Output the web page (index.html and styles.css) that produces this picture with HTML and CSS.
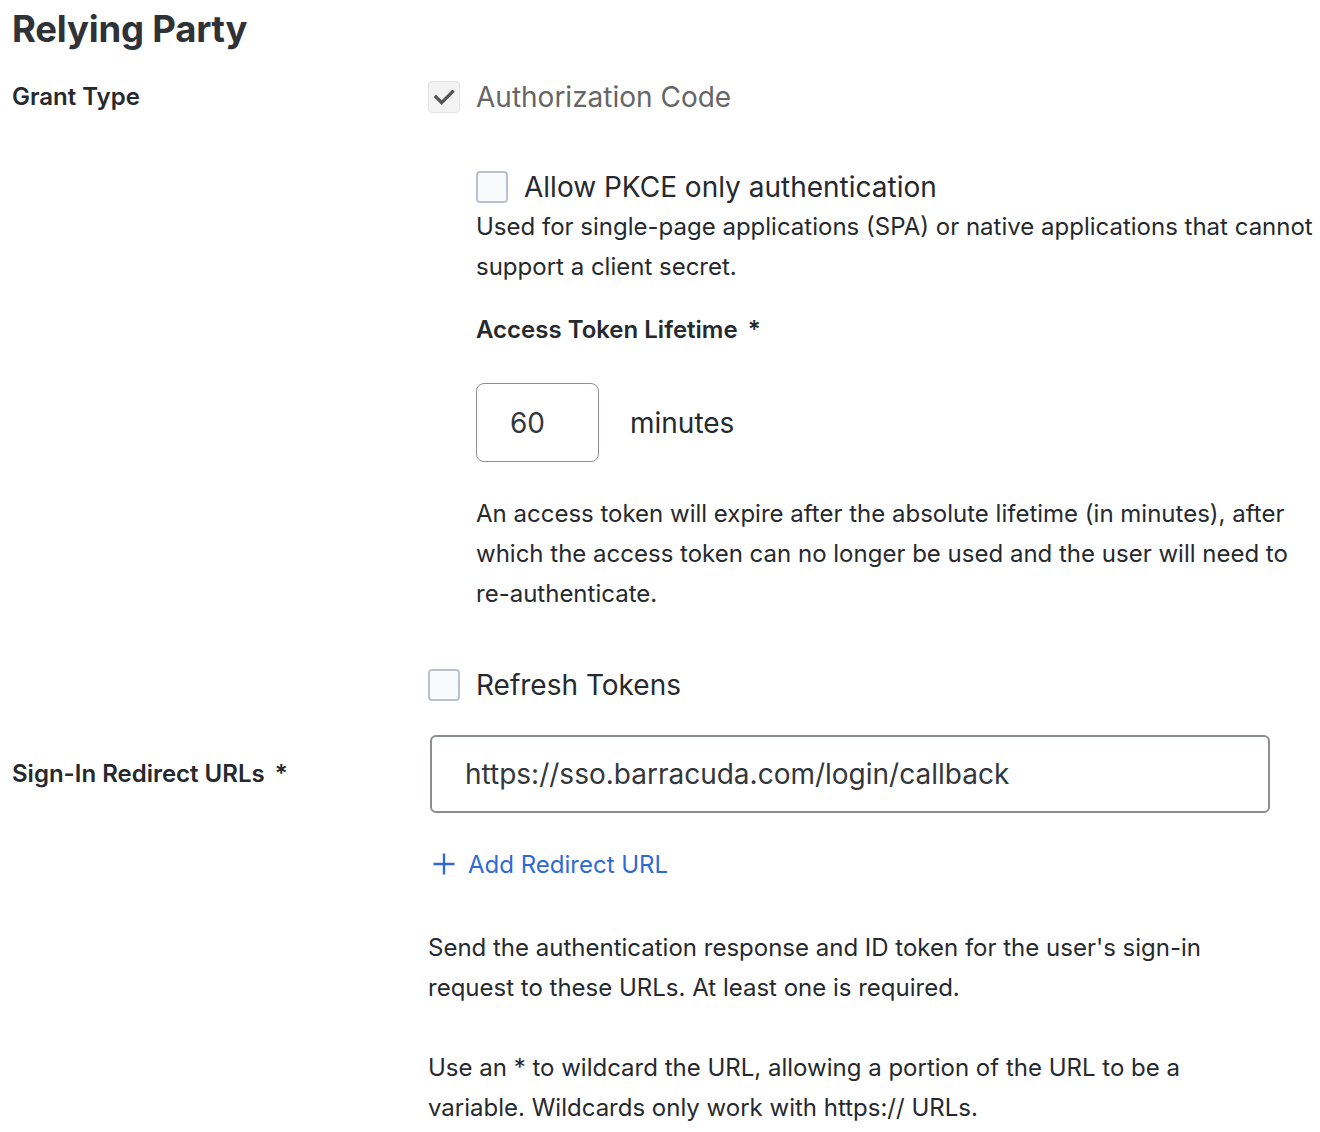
FILE: index.html
```html
<!DOCTYPE html>
<html lang="en">
<head>
<meta charset="utf-8">
<title>Relying Party</title>
<link rel="stylesheet" href="styles.css">
</head>
<body>
<main class="page">
  <h1 class="title">Relying Party</h1>
  <div class="form">
    <div class="label label-grant">Grant Type</div>
    <div class="field">
      <div class="check-row">
        <span class="box box-checked">
          <svg viewBox="0 0 32 32" width="32" height="32"><path d="M7.5 16l6 6L25 10.5" fill="none" stroke="#555" stroke-width="3.6" stroke-linecap="square"/></svg>
        </span>
        <span class="check-text check-text-disabled">Authorization Code</span>
      </div>
      <div class="nested">
        <div class="check-row check-row-pkce">
          <span class="box"></span>
          <span class="check-text">Allow PKCE only authentication</span>
        </div>
        <p class="desc">Used for single-page applications (SPA) or native applications that cannot support a client secret.</p>
        <div class="sub-label">Access Token Lifetime<span class="req">*</span></div>
        <div class="lifetime">
          <div class="num-input">60</div>
          <span class="unit">minutes</span>
        </div>
        <p class="desc desc-token">An access token will expire after the absolute lifetime (in minutes), after which the access token can no longer be used and the user will need to re-authenticate.</p>
      </div>
      <div class="check-row check-row-refresh">
        <span class="box"></span>
        <span class="check-text">Refresh Tokens</span>
      </div>
    </div>

    <div class="label label-redirect">Sign-In Redirect URLs<span class="req">*</span></div>
    <div class="field field-redirect">
      <div class="url-input">https://sso.barracuda.com/login/callback</div>
      <a class="add-link" href="#">
        <svg viewBox="0 0 24 24" width="24" height="24"><path d="M12 1.5v21M1.5 12h21" fill="none" stroke="currentColor" stroke-width="2.4"/></svg>
        <span>Add Redirect URL</span>
      </a>
      <p class="desc desc-send">Send the authentication response and ID token for the user's sign-in request to these URLs. At least one is required.</p>
      <p class="desc desc-wild">Use an * to wildcard the URL, allowing a portion of the URL to be a variable. Wildcards only work with https:// URLs.</p>
    </div>
  </div>
</main>
</body>
</html>
```
FILE: styles.css
```css
* { box-sizing: border-box; }
html, body { margin: 0; padding: 0; background: #ffffff; }
body {
  font-family: Inter, "Noto Sans", "Liberation Sans", sans-serif;
  color: #26292e;
}
.page { padding: 0 0 0 12px; width: 1320px; }
.title {
  margin: 0;
  padding-top: 5px;
  font-size: 36.5px;
  line-height: 48px;
  font-weight: 700;
  color: #2f3237;
  letter-spacing: -0.2px;
}
.form {
  display: grid;
  grid-template-columns: 416px 1fr;
  row-gap: 30px;
  margin-top: 24px;
}
.label {
  font-size: 24px;
  font-weight: 600;
  line-height: 40px;
  color: #26292e;
}
.req { margin-left: 10px; }
.label-redirect { padding-top: 19px; }
.field { display: flex; flex-direction: column; align-items: flex-start; }
.check-row {
  display: flex;
  align-items: center;
  gap: 16px;
  height: 40px;
}
.box {
  width: 32px;
  height: 32px;
  border: 2px solid #b9c2ce;
  border-radius: 4px;
  background: #f8fafc;
  display: flex;
  align-items: center;
  justify-content: center;
}
.box-checked {
  border: 1.5px solid #e4e4e4;
  background: #f3f3f3;
}
.box-checked svg { display: block; }
.check-text {
  font-size: 28px;
  line-height: 40px;
  color: #26292e;
}
.check-text-disabled { color: #666666; }
.nested { margin-left: 48px; display: flex; flex-direction: column; align-items: flex-start; }
.check-row-pkce { margin-top: 50px; }
.desc {
  margin: 0;
  font-size: 24px;
  line-height: 40px;
  color: #26292e;
}
.nested .desc { max-width: 844px; }
.sub-label {
  margin-top: 23px;
  font-size: 24px;
  font-weight: 600;
  line-height: 40px;
}
.lifetime {
  margin-top: 33px;
  display: flex;
  align-items: center;
  gap: 31px;
}
.num-input {
  width: 123px;
  height: 79px;
  border: 1.5px solid #8d9095;
  border-radius: 8px;
  padding-left: 33px;
  display: flex;
  align-items: center;
  font-size: 28px;
  color: #33373c;
}
.unit { font-size: 28px; color: #26292e; }
.desc-token { margin-top: 32px; }
.check-row-refresh { margin-top: 51px; }
.url-input {
  margin-left: 2px;
  width: 840px;
  height: 78px;
  border: 2px solid #8a8d93;
  border-radius: 6px;
  padding-left: 33px;
  display: flex;
  align-items: center;
  font-size: 28px;
  color: #33373c;
}
.add-link {
  margin-top: 31px;
  margin-left: 4px;
  display: flex;
  align-items: center;
  gap: 12px;
  height: 40px;
  font-size: 24px;
  color: #2e6ad6;
  text-decoration: none;
}
.add-link svg { display: block; }
.desc-send { margin-top: 44px; max-width: 840px; }
.desc-wild { margin-top: 40px; max-width: 840px; }
```
